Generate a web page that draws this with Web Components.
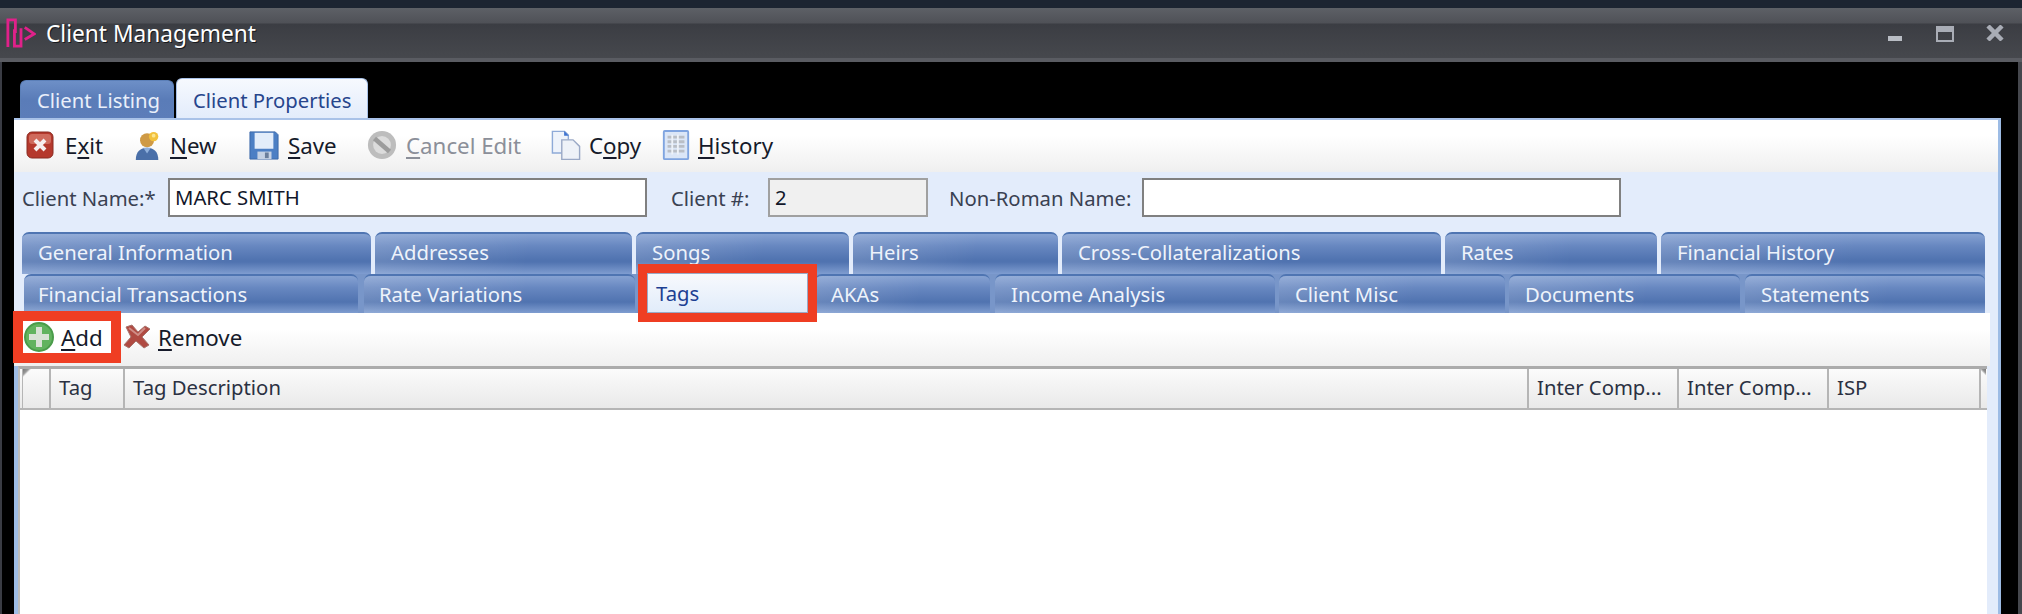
<!DOCTYPE html>
<html>
<head>
<meta charset="utf-8">
<title>Client Management</title>
<style>
  html, body { margin: 0; padding: 0; background: #000; }
  body { width: 2022px; height: 614px; overflow: hidden; font: 20.3px "Noto Sans", "Liberation Sans", sans-serif; }
  u { text-underline-offset: 3px; text-decoration-thickness: 2px; }
</style>
</head>
<body>
<template id="icons">
  <svg data-name="exit" viewBox="0 0 28 28"><rect x="1" y="1" width="26" height="26" rx="5" fill="#b5382c" stroke="#8a2a20"/><rect x="3" y="3" width="22" height="10" rx="3" fill="#cf6a5c"/><path d="M9 9l10 10M19 9L9 19" stroke="#f6eeee" stroke-width="4"/></svg>
  <svg data-name="new" viewBox="0 0 28 32"><circle cx="13" cy="11" r="7.500" fill="#cf9a45"/><circle cx="20" cy="7" r="5" fill="#f2c13c"/><circle cx="20" cy="6" r="2" fill="#fbe58e"/><path d="M1 32c0-9 5-13 12-13s12 4 12 13z" fill="#4a6fa8"/><path d="M9 19l4 6 4-6z" fill="#8fb0dc"/></svg>
  <svg data-name="save" viewBox="0 0 32 32"><path d="M1 2h27l3 3v26H1z" fill="#4c7fc4" stroke="#3a66a8"/><rect x="6" y="3" width="20" height="17" fill="#e3edfa"/><rect x="9" y="23" width="15" height="8" fill="#c5d2e4"/><rect x="17" y="24" width="4" height="6" fill="#6b7f9b"/></svg>
  <svg data-name="cancel" viewBox="0 0 32 32"><circle cx="16" cy="16" r="15" fill="#bdbdbd"/><circle cx="16" cy="16" r="9.500" fill="#dcdcdc"/><path d="M8 9l16 14" stroke="#9c9c9c" stroke-width="5"/></svg>
  <svg data-name="copy" viewBox="0 0 32 32"><path d="M1.500 1.500h13l4 4v19h-17z" fill="#eef3fb" stroke="#8eaad8" stroke-width="1.500"/><path d="M14 1l5 5h-5z" fill="#3f74d0"/><path d="M11.500 10.500h12l7 7v14h-19z" fill="#eef2f8" stroke="#9aa9c6" stroke-width="1.500"/></svg>
  <svg data-name="history" viewBox="0 0 28 32"><rect x="1" y="1" width="26" height="30" rx="1" fill="#dbe6f7" stroke="#7fa4e0" stroke-width="2"/><path d="M5 6h18v3H5zM5 11h18v3H5zM5 16h18v3H5zM5 21h18v3H5z" fill="#b9bec6"/><path d="M10 5v21M16 5v21" stroke="#eef2f8" stroke-width="2"/></svg>
  <svg data-name="add" viewBox="0 0 30 30"><circle cx="15" cy="15" r="14" fill="#62b35f" stroke="#4a9c4a" stroke-width="2"/><path d="M15 5v20M5 15h20" stroke="#d9e2d6" stroke-width="6"/></svg>
  <svg data-name="remove" viewBox="0 0 28 26"><path d="M3 3l6-2 6 7 7-6 5 3-8 8 7 8-5 3-8-7-7 7-5-3 7-8z" fill="#b04a42" stroke="#a8736c"/><path d="M6 4l9 7 7-7" fill="none" stroke="#cf8d86" stroke-width="2"/></svg>
  <svg data-name="logo" viewBox="0 0 32 32"><path d="M2 31V2h8v14M9 12v18h7V11M20 10l10 7-10 6" fill="none" stroke="#e0218a" stroke-width="3"/></svg>
  <svg data-name="min" viewBox="0 0 18 18"><rect x="2" y="12" width="14" height="5" fill="#b9bdc4"/></svg>
  <svg data-name="max" viewBox="0 0 18 16"><rect x="1" y="1" width="16" height="14" fill="none" stroke="#a9adb6" stroke-width="2"/><rect x="1" y="1" width="16" height="5" fill="#a9adb6"/></svg>
  <svg data-name="close" viewBox="0 0 18 16"><path d="M2 1l14 14M16 1L2 15" stroke="#a9adb6" stroke-width="4.500"/></svg>
</template>

<app-window>
  <title-bar>Client Management</title-bar>
  <div slot="tabs" style="display:flex;align-items:flex-end;gap:2px;height:56px;padding-left:6px;box-sizing:border-box">
    <top-tab style="width:154px">Client Listing</top-tab>
    <top-tab active style="width:192px">Client Properties</top-tab>
  </div>
  <tool-bar style="height:52px;padding:9px 0 0 12px;--tool-font:22.3px">
    <tool-button icon="exit" style="width:108px;--size:28px"><span>E<u>x</u>it</span></tool-button>
    <tool-button icon="new" style="width:114px;--size:28px;--cell:36px"><span><u>N</u>ew</span></tool-button>
    <tool-button icon="save" style="width:118px;--size:32px;--cell:40px"><span><u>S</u>ave</span></tool-button>
    <tool-button icon="cancel" disabled style="width:184px;--size:32px;--cell:40px"><span><u>C</u>ancel Edit</span></tool-button>
    <tool-button icon="copy" style="width:112px;--size:32px"><span>C<u>o</u>py</span></tool-button>
    <tool-button icon="history" style="--size:28px;--cell:36px"><span><u>H</u>istory</span></tool-button>
  </tool-bar>
  <form-row>
    <form-field label="Client Name:*" style="--lw:146px;--fw:479px;margin-left:8px">MARC SMITH</form-field>
    <form-field label="Client #:" readonly style="--lw:97px;--fw:160px;margin-left:24px">2</form-field>
    <form-field label="Non-Roman Name:" style="--lw:193px;--fw:479px;margin-left:21px"></form-field>
  </form-row>
  <tab-row>
    <blue-tab style="width:349px;margin-left:8px">General Information</blue-tab>
    <blue-tab style="width:257px">Addresses</blue-tab>
    <blue-tab style="width:213px">Songs</blue-tab>
    <blue-tab style="width:205px">Heirs</blue-tab>
    <blue-tab style="width:379px">Cross-Collateralizations</blue-tab>
    <blue-tab style="width:212px">Rates</blue-tab>
    <blue-tab style="width:324px">Financial History</blue-tab>
  </tab-row>
  <tab-row lower>
    <blue-tab style="width:334px;margin-left:10px;--pad:14px">Financial Transactions</blue-tab>
    <blue-tab style="width:271px;margin-left:2px;--pad:15px">Rate Variations</blue-tab>
    <blue-tab selected style="width:161px;margin-left:8px;margin-top:-1px;--pad:8px">Tags</blue-tab>
    <blue-tab style="width:175px;margin-left:3px">AKAs</blue-tab>
    <blue-tab style="width:280px;margin-left:1px">Income Analysis</blue-tab>
    <blue-tab style="width:226px">Client Misc</blue-tab>
    <blue-tab style="width:231px">Documents</blue-tab>
    <blue-tab style="width:240px;margin-left:1px">Statements</blue-tab>
  </tab-row>
  <tool-bar sub style="height:53px;padding:8px 0 0 9px;margin-right:8px;--tool-font:22.3px">
    <tool-button icon="add" style="width:88px;height:32px;--size:30px;--cell:37px;padding-left:1px;box-sizing:border-box;outline:10px solid #ef3e23;position:relative;z-index:2;background:#fff"><span><u>A</u>dd</span></tool-button>
    <tool-button icon="remove" style="margin-left:12px;--size:28px;--cell:35px"><span><u>R</u>emove</span></tool-button>
  </tool-bar>
  <data-grid>
    <grid-head corner style="width:29px"></grid-head>
    <grid-head style="width:74px">Tag</grid-head>
    <grid-head style="width:1404px">Tag Description</grid-head>
    <grid-head style="width:150px">Inter Comp...</grid-head>
    <grid-head style="width:150px">Inter Comp...</grid-head>
    <grid-head style="width:152px">ISP</grid-head>
    <grid-head corner end style="width:5px"></grid-head>
  </data-grid>
</app-window>

<script>
const iconSource = document.getElementById('icons').content

function makeIcon(name) {
  const svg = iconSource.querySelector(`[data-name="${name}"]`).cloneNode(true)
  svg.removeAttribute('data-name')
  svg.style.display = 'block'
  svg.style.width = '100%'
  svg.style.height = '100%'
  return svg
}

class AppWindow extends HTMLElement {
  constructor() {
    super()
    this.attachShadow({ mode: 'open' }).innerHTML = `
      <style>
        :host { display: flex; flex-direction: column; width: 2022px; height: 614px; overflow: hidden; background: #000; color: #1b2333; }
        .frame { flex: 1; display: flex; flex-direction: column; min-height: 0; border-left: 2px solid #3a3c44; border-right: 4px solid #45474d; }
        .tabs, .panel { margin-left: 12px; width: 1987px; }
        .panel { flex: 1; display: flex; flex-direction: column; box-sizing: border-box; background: #e3ecfb;
          border-top: 2px solid #a9c2e8; border-right: 3px solid #9dbce5; min-height: 0; }
      </style>
      <slot name="bar"></slot>
      <div class="frame">
        <div class="tabs"><slot name="tabs"></slot></div>
        <div class="panel"><slot></slot></div>
      </div>`
  }
  connectedCallback() {
    const bar = this.querySelector('title-bar')
    if (bar) bar.slot = 'bar'
  }
}

class TitleBar extends HTMLElement {
  constructor() {
    super()
    this.attachShadow({ mode: 'open' }).innerHTML = `
      <style>
        :host { display: flex; align-items: center; box-sizing: border-box; height: 62px; flex: none;
          border-top: 8px solid #1c2431; border-bottom: 4px solid #5a5c62;
          background: linear-gradient(#5d6066 0, #4f5157 15px, #3b3d43 16px, #46484d 100%); color: #fff; }
        .logo { width: 30px; height: 30px; margin-left: 6px; flex: none; }
        .name { margin-left: 10px; font-size: 22.7px; flex: 1; text-shadow: 1px 1px 0 #16181c; }
        .ctl { flex: none; }
      </style>
      <span class="logo"></span>
      <span class="name"><slot></slot></span>
      <span class="ctl" style="width:18px;height:18px;margin-right:32px"></span>
      <span class="ctl" style="width:18px;height:16px;margin:2px 32px 0 0"></span>
      <span class="ctl" style="width:18px;height:16px;margin-right:18px"></span>`
    const root = this.shadowRoot
    root.querySelector('.logo').append(makeIcon('logo'))
    const ctl = root.querySelectorAll('.ctl')
    ctl[0].append(makeIcon('min'))
    ctl[1].append(makeIcon('max'))
    ctl[2].append(makeIcon('close'))
  }
}

class TopTab extends HTMLElement {
  constructor() {
    super()
    this.attachShadow({ mode: 'open' }).innerHTML = `
      <style>
        :host { display: block; box-sizing: border-box; height: 38px; padding: 4px 0 0 16px; border-radius: 6px 6px 0 0;
          color: #e9effa; border: 1px solid #5b7fb8; border-bottom: 0; line-height: 30px;
          background: linear-gradient(#6d8fc7, #5a7cb8 50%, #5c7db9); }
        :host([active]) { height: 40px; padding-top: 6px; color: #27458c; border-color: #a9c2e8;
          background: linear-gradient(#f6f9fe, #e3ecfb); }
      </style>
      <slot></slot>`
  }
}

class ToolBar extends HTMLElement {
  constructor() {
    super()
    this.attachShadow({ mode: 'open' }).innerHTML = `
      <style>
        :host { display: flex; box-sizing: border-box; flex: none; align-items: flex-start; background: linear-gradient(#fff 30%, #efefef); }
      </style>
      <slot></slot>`
  }
}

class ToolButton extends HTMLElement {
  constructor() {
    super()
    this.attachShadow({ mode: 'open' }).innerHTML = `
      <style>
        :host { display: flex; align-items: center; flex: none; height: 32px; color: #151a2a; font-size: var(--tool-font, 20px); white-space: nowrap; }
        :host([disabled]) { color: #8b8f99; }
        .cell { width: var(--cell, 39px); flex: none; }
        .icon { display: block; width: var(--size, 28px); height: 30px; }
      </style>
      <span class="cell"><span class="icon"></span></span>
      <slot></slot>`
    this.shadowRoot.querySelector('.icon').append(makeIcon(this.getAttribute('icon')))
  }
}

class FormRow extends HTMLElement {
  constructor() {
    super()
    this.attachShadow({ mode: 'open' }).innerHTML = `
      <style>
        :host { display: flex; align-items: center; box-sizing: border-box; height: 60px; flex: none; padding-bottom: 15px; padding-top: 6px; }
      </style>
      <slot></slot>`
  }
}

class FormField extends HTMLElement {
  constructor() {
    super()
    this.attachShadow({ mode: 'open' }).innerHTML = `
      <style>
        :host { display: flex; align-items: center; flex: none; color: #3a4152; }
        .label { width: var(--lw); flex: none; white-space: nowrap; }
        .box { width: var(--fw); height: 39px; box-sizing: border-box; border: 2px solid #808080; background: #fff; padding: 0 5px; line-height: 35px; color: #12172a; }
        :host([readonly]) .box { background: #f0f0f0; border-color: #a0a0a0; }
      </style>
      <span class="label"></span>
      <div class="box"><slot></slot></div>`
    this.shadowRoot.querySelector('.label').textContent = this.getAttribute('label')
  }
}

class TabRow extends HTMLElement {
  constructor() {
    super()
    this.attachShadow({ mode: 'open' }).innerHTML = `
      <style>
        :host { display: flex; gap: 4px; flex: none; height: 42px; }
        :host([lower]) { height: 39px; background: linear-gradient(90deg, transparent 24px, #7896c9 24px, #7896c9 1971px, transparent 1971px); }
      </style>
      <slot></slot>`
  }
}

class BlueTab extends HTMLElement {
  constructor() {
    super()
    this.attachShadow({ mode: 'open' }).innerHTML = `
      <style>
        :host { display: block; box-sizing: border-box; flex: none; padding-left: var(--pad, 16px); border-radius: 7px 7px 0 0;
          color: #eef3fb; line-height: 36px; white-space: nowrap;
          border-top: 2px solid #4f75b2;
          background:
            linear-gradient(100deg, rgba(255,255,255,.14), rgba(255,255,255,0) 60%),
            linear-gradient(#86a2d2 0, #6787c0 12px, #5073b0 26px, #5073b0 70%, #7f9dd0 100%); }
        :host([selected]) { position: relative; z-index: 2; border: 1px solid #9aa9c6; line-height: 38px; border-radius: 0; color: #1d3f92;
          outline: 9px solid #ef3e23; outline-offset: 0; background: linear-gradient(#f7f9fd, #e1ecfa); }
      </style>
      <slot></slot>`
  }
}

class DataGrid extends HTMLElement {
  constructor() {
    super()
    this.attachShadow({ mode: 'open' }).innerHTML = `
      <style>
        :host { display: block; flex: 1; box-sizing: border-box; margin-right: 11px; border-left: 4px solid #9dbce5; min-height: 0; }
        .inner { height: 100%; box-sizing: border-box; background: #fff; border-left: 2px solid #bcbcbc; border-top: 3px solid #ababab; }
        .head { display: flex; height: 41px; box-sizing: border-box; padding-left: 2px; border-bottom: 2px solid #b5b5b5;
          background: linear-gradient(#fbfbfb, #e9e9e9); }
      </style>
      <div class="inner"><div class="head"><slot></slot></div></div>`
  }
}

class GridHead extends HTMLElement {
  constructor() {
    super()
    this.attachShadow({ mode: 'open' }).innerHTML = `
      <style>
        :host { display: block; box-sizing: border-box; flex: none; padding-left: 8px; border-right: 2px solid #b5b5b5;
          color: #2b3142; line-height: 37px; white-space: nowrap; overflow: hidden; }
        :host([corner]) { padding: 0; border-left: 1px solid #b5b5b5; background: linear-gradient(135deg, #777 0, #999 4px, transparent 6px); }
        :host([end]) { border-left: 0; border-right: 0; background: linear-gradient(225deg, #777 0, #999 3px, transparent 5px); }
      </style>
      <slot></slot>`
  }
}

customElements.define('title-bar', TitleBar)
customElements.define('top-tab', TopTab)
customElements.define('tool-bar', ToolBar)
customElements.define('tool-button', ToolButton)
customElements.define('form-row', FormRow)
customElements.define('form-field', FormField)
customElements.define('tab-row', TabRow)
customElements.define('blue-tab', BlueTab)
customElements.define('grid-head', GridHead)
customElements.define('data-grid', DataGrid)
customElements.define('app-window', AppWindow)
</script>
</body>
</html>
